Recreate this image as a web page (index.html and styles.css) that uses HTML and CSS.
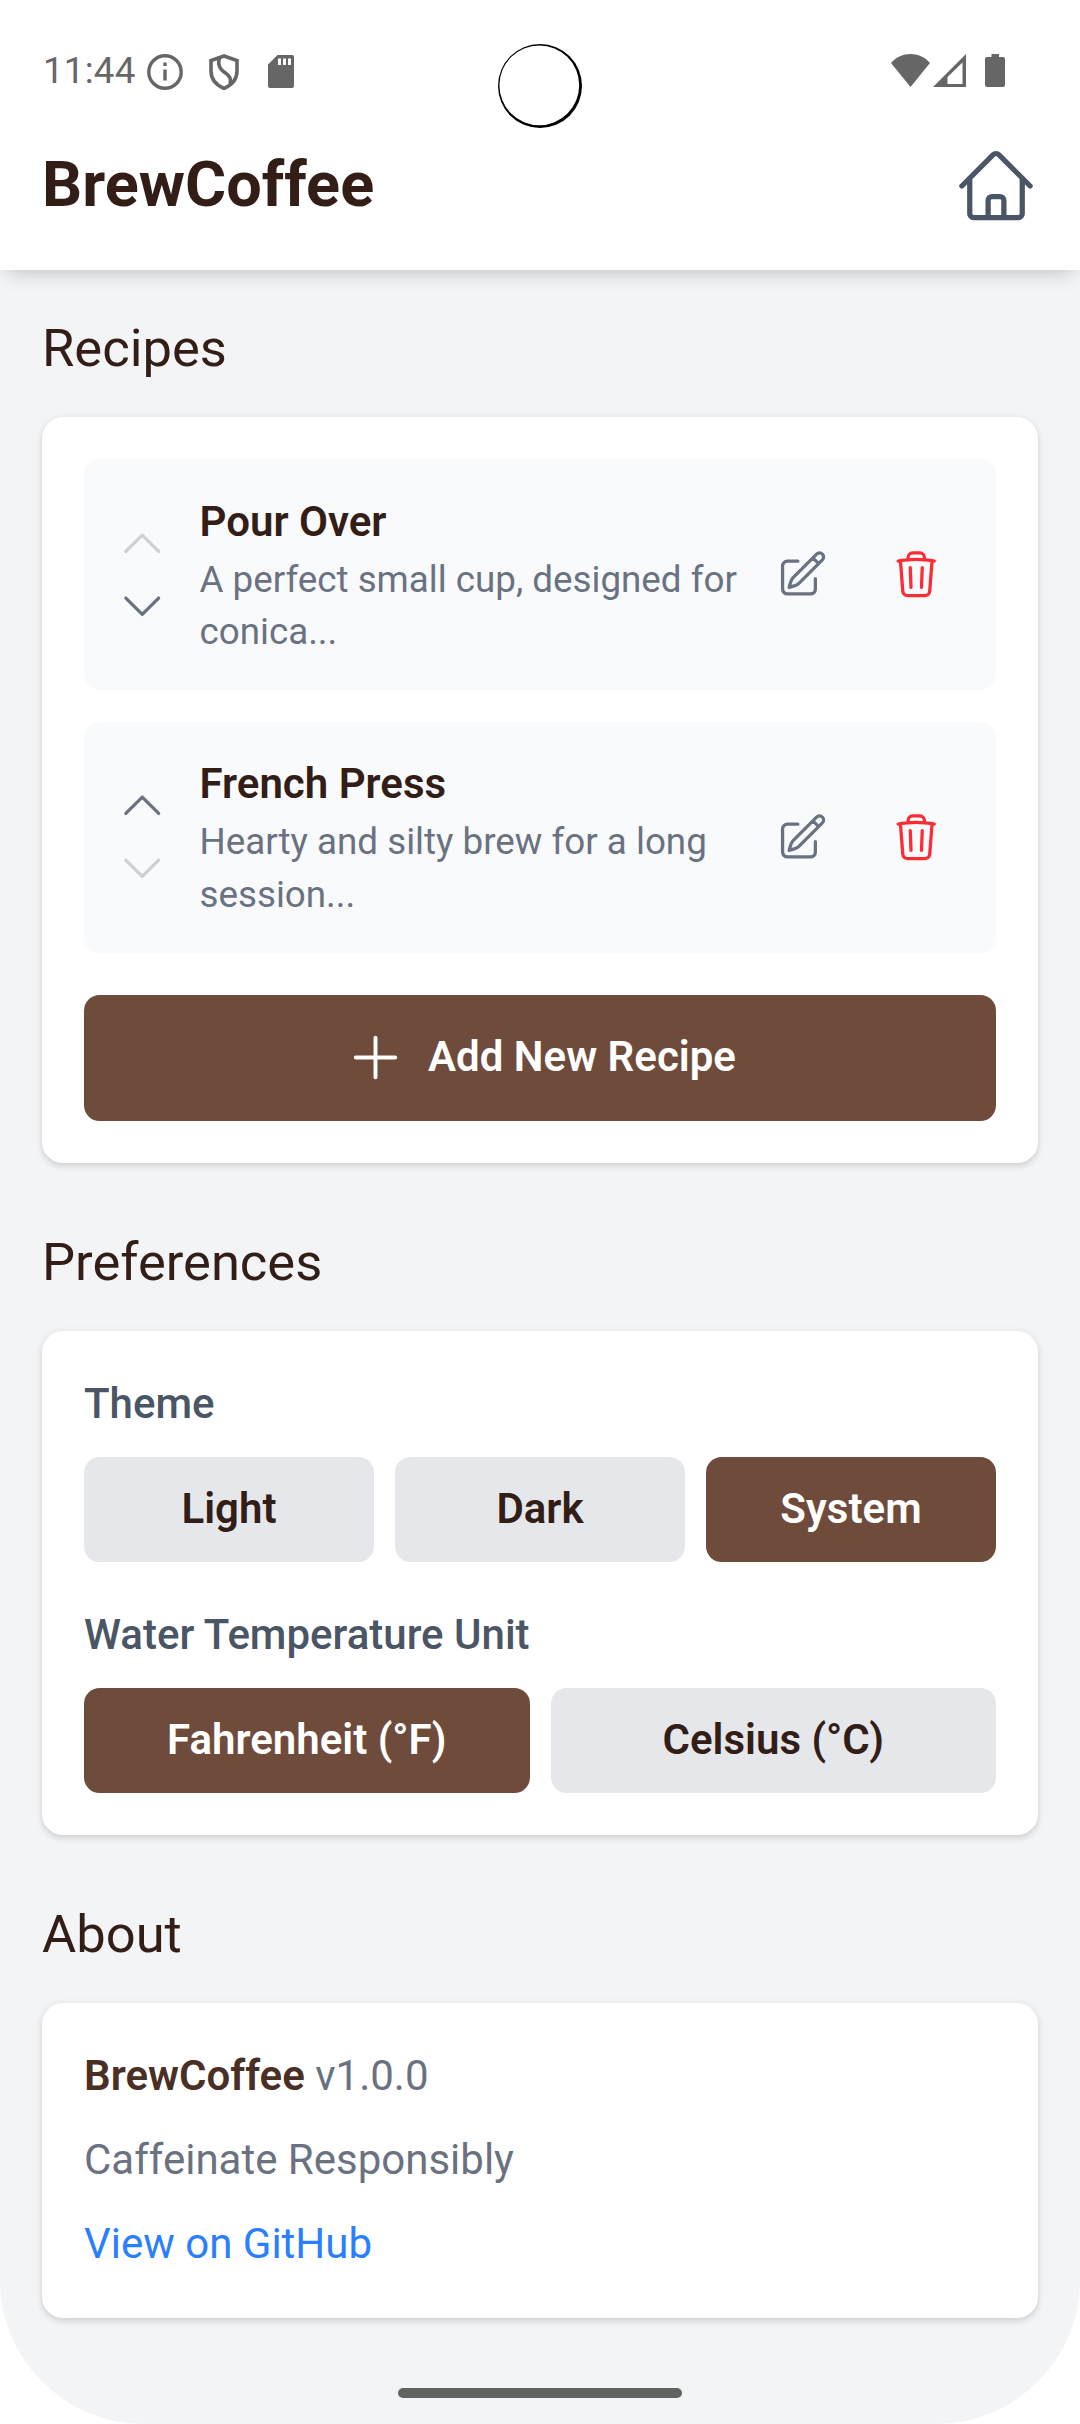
FILE: index.html
```html
<!DOCTYPE html>
<html lang="en">
<head>
<meta charset="utf-8">
<title>BrewCoffee</title>
<link rel="stylesheet" href="styles.css">
</head>
<body>
<svg class="sprite" aria-hidden="true">
  <symbol id="home" viewBox="0 0 24 24"><path d="m2.25 12 8.954-8.955c.44-.439 1.152-.439 1.591 0L21.75 12M4.5 9.75v10.125c0 .621.504 1.125 1.125 1.125H9.75v-4.875c0-.621.504-1.125 1.125-1.125h2.25c.621 0 1.125.504 1.125 1.125V21h4.125c.621 0 1.125-.504 1.125-1.125V9.75M8.25 21h8.25"/></symbol>
  <symbol id="up" viewBox="0 0 24 24"><path d="m4.5 15.75 7.5-7.5 7.5 7.5"/></symbol>
  <symbol id="down" viewBox="0 0 24 24"><path d="m19.5 8.25-7.5 7.5-7.5-7.5"/></symbol>
  <symbol id="plus" viewBox="0 0 24 24"><path d="M12 4.5v15m7.5-7.5h-15"/></symbol>
  <symbol id="edit" viewBox="0 0 24 24"><path d="m16.862 4.487 1.687-1.688a1.875 1.875 0 1 1 2.652 2.652L10.582 16.07a4.5 4.5 0 0 1-1.897 1.13L6 18l.8-2.685a4.5 4.5 0 0 1 1.13-1.897l8.932-8.931Zm0 0L19.5 7.125M18 14v4.75A2.25 2.25 0 0 1 15.75 21H5.25A2.25 2.25 0 0 1 3 18.75V8.25A2.25 2.25 0 0 1 5.25 6H10"/></symbol>
  <symbol id="trash" viewBox="0 0 24 24"><path d="m14.74 9-.346 9m-4.788 0L9.26 9m9.968-3.21c.342.052.682.107 1.022.166m-1.022-.165L18.16 19.673a2.25 2.25 0 0 1-2.244 2.077H8.084a2.25 2.25 0 0 1-2.244-2.077L4.772 5.79m14.456 0a48.108 48.108 0 0 0-3.478-.397m-12 .562c.34-.059.68-.114 1.022-.165m0 0a48.11 48.11 0 0 1 3.478-.397m7.5 0v-.916c0-1.18-.91-2.164-2.09-2.201a51.964 51.964 0 0 0-3.32 0c-1.18.037-2.09 1.022-2.09 2.201v.916m7.5 0a48.667 48.667 0 0 0-7.5 0"/></symbol>
</svg>
<div class="screen">
  <header class="header">
    <div class="status">
      <div class="status-left">
        <span class="time">11:44</span>
        <svg class="st-info" viewBox="0 0 36 36"><circle cx="18" cy="18" r="16.2"/><path d="M18 15.500v11M18 8.500v3.400"/></svg>
        <svg class="st-shield" viewBox="0 0 30 36"><path d="M15 2 2 6.5V17c0 8 5 14 13 17.500 8-3.500 13-9.500 13-17.500V6.500ZM10.500 4c-2 6-.5 10 4 13.500 6 4 8 7 6.500 12.500"/></svg>
        <svg class="st-card" viewBox="0 0 26 33"><path fill-rule="evenodd" d="M9.500 0H24a2 2 0 0 1 2 2v29a2 2 0 0 1-2 2H2a2 2 0 0 1-2-2V9.500ZM10 3.500v6.500h3V3.500Zm5 0v6.500h3V3.500Zm5 0v6.500h3V3.500Z"/></svg>
      </div>
      <div class="status-right">
        <svg class="st-wifi" viewBox="0 0 39 33"><path d="M0 9C10-3 29-3 39 9L19.500 33Z"/></svg>
        <svg class="st-signal" viewBox="0 0 33 33"><path fill-rule="evenodd" d="M33 0v33H0ZM29.500 8.500 14.500 23v7h15Z"/></svg>
        <svg class="st-battery" viewBox="0 0 20 33"><path d="M6.500 0h7.500v3H18a2 2 0 0 1 2 2v26a2 2 0 0 1-2 2H2a2 2 0 0 1-2-2V5a2 2 0 0 1 2-2h4.500Z"/></svg>
      </div>
    </div>
    <div class="titlebar">
      <h1 class="title">BrewCoffee</h1>
      <svg class="icon icon-home"><use href="#home"/></svg>
    </div>
    <svg class="camera" viewBox="0 0 84 84"><path fill-rule="evenodd" d="M42 0a42 42 0 1 0 0 84 42 42 0 0 0 0-84ZM41.300 1.400a39.900 39.900 0 1 1 0 79.800 39.900 39.900 0 0 1 0-79.800Z"/></svg>
  </header>
  <main class="main">
    <section>
      <h2 class="heading">Recipes</h2>
      <div class="card recipes">
        <div class="recipe">
          <div class="order">
            <svg class="icon disabled"><use href="#up"/></svg>
            <svg class="icon"><use href="#down"/></svg>
          </div>
          <div class="info">
            <h3 class="name">Pour Over</h3>
            <p class="desc">A perfect small cup, designed for conica...</p>
          </div>
          <div class="actions">
            <svg class="icon"><use href="#edit"/></svg>
            <svg class="icon danger"><use href="#trash"/></svg>
          </div>
        </div>
        <div class="recipe">
          <div class="order">
            <svg class="icon"><use href="#up"/></svg>
            <svg class="icon disabled"><use href="#down"/></svg>
          </div>
          <div class="info">
            <h3 class="name">French Press</h3>
            <p class="desc">Hearty and silty brew for a long session...</p>
          </div>
          <div class="actions">
            <svg class="icon"><use href="#edit"/></svg>
            <svg class="icon danger"><use href="#trash"/></svg>
          </div>
        </div>
        <div class="add"><svg class="icon icon-plus"><use href="#plus"/></svg><span class="add-text">Add New Recipe</span></div>
      </div>
    </section>
    <section>
      <h2 class="heading">Preferences</h2>
      <div class="card prefs">
        <div class="field">
          <div class="label">Theme</div>
          <div class="options"><div class="option">Light</div><div class="option">Dark</div><div class="option selected">System</div></div>
        </div>
        <div class="field">
          <div class="label">Water Temperature Unit</div>
          <div class="options"><div class="option selected">Fahrenheit (°F)</div><div class="option">Celsius (°C)</div></div>
        </div>
      </div>
    </section>
    <section>
      <h2 class="heading">About</h2>
      <div class="card about">
        <p><span class="app">BrewCoffee</span> v1.0.0</p>
        <p>Caffeinate Responsibly</p>
        <p class="link">View on GitHub</p>
      </div>
    </section>
  </main>
  <div class="navbar"></div>
</div>
</body>
</html>
```
FILE: styles.css
```css
* { box-sizing: border-box; margin: 0; padding: 0; }
body { background: #fff; font-family: Roboto, sans-serif; font-size: 42px; line-height: 63px; }
.sprite { display: none; }
.screen {
  width: 1080px; height: 2424px; overflow: hidden;
  display: flex; flex-direction: column;
  background: #f3f4f6; border-radius: 0 0 144px 144px;
}
.header {
  position: relative; height: 270px; flex: none; background: #fff;
  box-shadow: 0 12px 18px -8px rgba(0,0,0,.17), 0 1px 12px rgba(0,0,0,.04);
}
.status { display: flex; justify-content: space-between; height: 144px; padding: 0 75px 0 42px; color: #666; }
.status svg { fill: #666; flex: none; }
.status-left, .status-right { display: flex; align-items: flex-start; padding-top: 54px; }
.time { width: 105px; padding-left: 1px; font-size: 36.75px; line-height: 36px; letter-spacing: .2px; margin-top: -1px; }
.status .st-info { width: 36px; height: 36px; fill: none; stroke: #666; stroke-width: 3.4; }
.status .st-shield { width: 30px; height: 36px; margin-left: 26px; fill: none; stroke: #666; stroke-width: 3.6; }
.st-card { width: 26px; height: 33px; margin: 1px 0 0 29px; }
.st-wifi { width: 39px; height: 33px; }
.st-signal { width: 33px; height: 33px; margin-left: 3px; }
.st-battery { width: 20px; height: 33px; margin-left: 19px; }
.camera { position: absolute; left: 498px; top: 44px; width: 84px; height: 84px; }
.titlebar { display: flex; align-items: center; justify-content: space-between; height: 84px; padding: 0 42px; }
.title { font-size: 63px; line-height: 84px; font-weight: 700; color: #321e17; padding-bottom: 2px; }
.icon { width: 52.5px; height: 52.5px; flex: none; fill: none; stroke: #6a7282; stroke-width: 1.5; stroke-linecap: round; stroke-linejoin: round; }
.icon-home { width: 84px; height: 84px; stroke: #4a5565; }
.icon-plus { width: 63px; height: 63px; stroke: #fff; }
.disabled { opacity: .3; }
.danger { stroke: #fb2c36; }
.main { display: flex; flex-direction: column; gap: 63px; padding: 42px 42px 0; }
.heading { font-size: 52.5px; line-height: 73.5px; font-weight: 400; color: #321e17; margin-bottom: 31.5px; }
.card { background: #fff; border-radius: 21px; padding: 42px; box-shadow: 0 3px 6px rgba(0,0,0,.12), 0 1px 10px rgba(0,0,0,.05); }
.recipes { display: flex; flex-direction: column; gap: 31.5px; }
.recipe { display: flex; align-items: center; gap: 31.5px; padding: 31.5px; background: #f9fafb; border-radius: 15.75px; }
.order { display: flex; flex-direction: column; gap: 10.5px; }
.info { flex: 1; min-width: 0; margin-right: -26px; }
.name { font-size: 42px; line-height: 61px; padding-bottom: 2px; font-weight: 600; color: #321e17; }
.desc { font-size: 36.75px; line-height: 52.5px; color: #6a7282; }
.actions { display: flex; gap: 62px; padding: 0 22px 0 21px; }
.add {
  display: flex; align-items: center; justify-content: center; gap: 21px;
  height: 126px; margin-top: 10.5px; border-radius: 15.75px;
  background: #6f4b3b; color: #fff; font-weight: 600;
}
.add-text { padding-bottom: 2px; }
.prefs { display: flex; flex-direction: column; gap: 42px; }
.label { color: #4a5565; font-weight: 500; line-height: 61px; margin-bottom: 23px; }
.options { display: flex; gap: 21px; }
.option {
  flex: 1 1 0; height: 105px; line-height: 103px; text-align: center;
  border-radius: 15.75px; background: #e5e7eb; color: #321e17; font-weight: 600;
}
.selected { background: #6f4b3b; color: #fff; }
.about { display: flex; flex-direction: column; gap: 23px; padding-bottom: 44px; line-height: 61px; color: #6a7282; }
.app { color: #4a2f25; font-weight: 600; }
.link { color: #2b7fff; }
.navbar { width: 284px; height: 10px; margin: auto auto 26px; border-radius: 5px; background: #606461; }
```
